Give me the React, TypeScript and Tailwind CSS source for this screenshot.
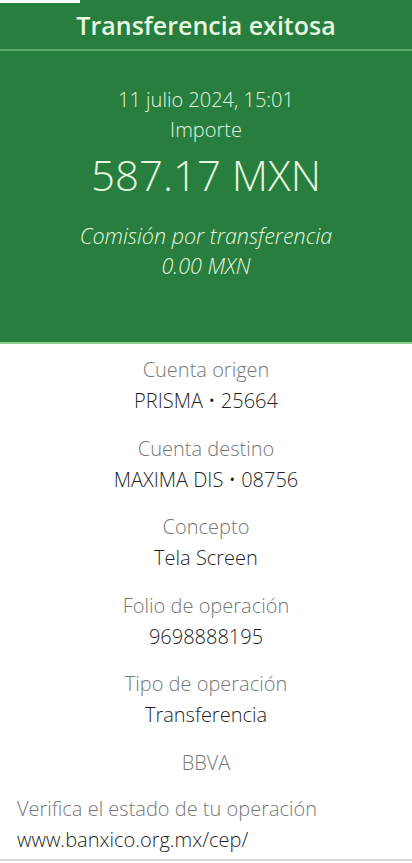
export default function App() {
  const rows = [
    { label: "Cuenta origen", value: "PRISMA • 25664" },
    { label: "Cuenta destino", value: "MAXIMA DIS • 08756" },
    { label: "Concepto", value: "Tela Screen" },
    { label: "Folio de operación", value: "9698888195" },
    { label: "Tipo de operación", value: "Transferencia" },
  ];

  return (
    <div className="w-[412px] h-[863px] bg-white font-['Open_Sans',sans-serif] font-light overflow-hidden">
      {/* Green summary */}
      <div className="bg-[#277e3f] text-[#e6f6df] border-b-2 border-[#8fcf92]">
        <div className="flex h-[3px]">
          <div className="w-[80px] bg-white" />
        </div>
        <div className="h-[48px] flex items-center justify-center border-b-2 border-[#5aa86a]">
          <h1 className="text-[25px] leading-[30px] font-semibold -mt-[3px]">Transferencia exitosa</h1>
        </div>
        <div className="flex flex-col items-center pt-[34px] pb-[61px]">
          <p className="text-[20px] leading-[30px]">11 julio 2024, 15:01</p>
          <p className="text-[20px] leading-[30px]">Importe</p>
          <p className="text-[42px] leading-[60px]">587.17 MXN</p>
          <p className="mt-[16px] text-[21.5px] leading-[30px] italic">Comisión por transferencia</p>
          <p className="text-[21.5px] leading-[30px] italic">0.00 MXN</p>
        </div>
      </div>

      {/* Details */}
      <div className="flex flex-col items-center pt-[10px]">
        {rows.map((r) => (
          <div key={r.label} className="flex flex-col items-center h-[78.5px]">
            <p className="text-[20px] leading-[31px] text-[#777777]">{r.label}</p>
            <p className="text-[20px] leading-[31px] text-[#1f1f1f]">{r.value}</p>
          </div>
        ))}
        <p className="text-[20px] leading-[31px] text-[#777777]">BBVA</p>
      </div>

      <div className="px-[17px] pt-[15px] pb-[4px] border-b-2 border-[#d9d9d9]">
        <p className="text-[20px] leading-[31px] text-[#777777]">Verifica el estado de tu operación</p>
        <p className="text-[20px] leading-[31px] text-[#1f1f1f]">www.banxico.org.mx/cep/</p>
      </div>
    </div>
  );
}
